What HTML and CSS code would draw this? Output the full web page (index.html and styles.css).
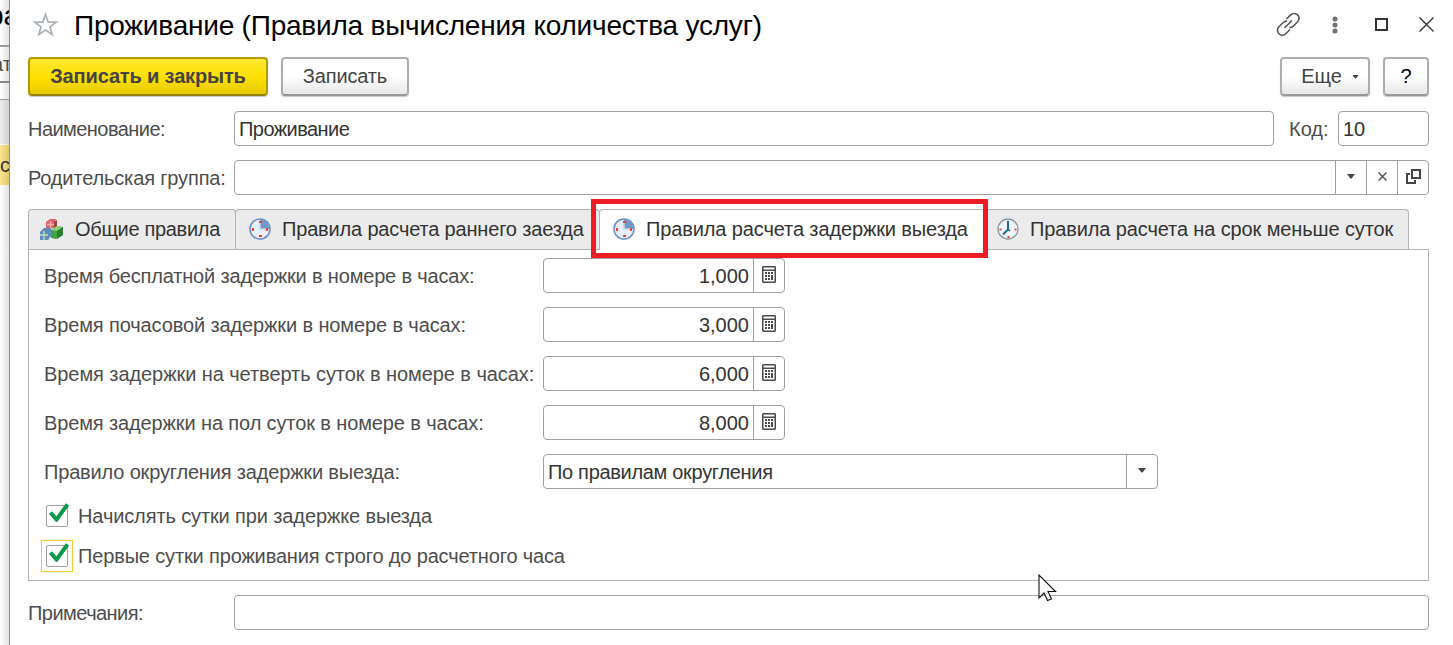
FILE: index.html
```
<!DOCTYPE html>
<html lang="ru">
<head>
  <meta charset="UTF-8" />
  <meta name="viewport" content="width=device-width, initial-scale=1.0"/>
  <title>Проживание (Правила вычисления количества услуг)</title>
  <link rel="stylesheet" href="styles.css">
</head>
<body>

  <!-- shared icons -->
  <svg class="sprite" width="0" height="0">
    <symbol id="calc" viewBox="0 0 14 17">
      <path fill="#4a4a4a" fill-rule="evenodd" d="M1 0h12l1 1v15l-1 1H1l-1-1V1zM1.500 1.500v2h11v-2zM1.500 5v10.500h11V5z"/>
      <path fill="#4a4a4a" d="M3 6h2v2H3zM6 6h2v2H6zM9 6h2v2H9zM3 9h2v2H3zM6 9h2v2H6zM9 9h2v5H9zM3 12h2v2H3zM6 12h2v2H6z"/>
    </symbol>
    <symbol id="clock" viewBox="0 0 22 22">
      <circle cx="11" cy="11" r="10" fill="#e6effb" stroke="#6f92c6" stroke-width="1.600"/>
      <path d="M11 1.500A9.500 9.500 0 0 1 20.500 11H11z" fill="#7495c8"/>
      <path d="M11 4v7h7" fill="none" stroke="#c3d4ec" stroke-width="1.500"/>
      <path fill="#fb3b1e" d="M10 3h3v2h-3zM3 10h2v3H3zM17 10h2v3h-2zM10 17h3v2h-3z"/>
    </symbol>
    <symbol id="tick" viewBox="0 0 20 19">
      <path d="M1.500 9.500l6 7L18.500 1.500" fill="none" stroke="#0a9a4a" stroke-width="4"/>
    </symbol>
    <symbol id="arrow" viewBox="0 0 8 5">
      <path d="M0 0h8L4.500 4.500h-1z" fill="#444"/>
    </symbol>
  </svg>

  <div class="app">
    <aside class="behind">
      <div class="behind-title">ра</div>
      <div class="behind-button">ат</div>
      <div class="behind-head"></div>
      <div class="behind-row">с</div>
    </aside>

    <main class="window">
      <header class="titlebar">
        <svg class="star" width="27" height="25" viewBox="0 0 27 25">
          <path d="M13.500 2.500l2.700 7.600h8l-6.300 4.900 2.300 7.500-6.700-4.500-6.700 4.500 2.300-7.500L2.800 10.100h8z" fill="none" stroke="#a9b0b7" stroke-width="1.700"/>
        </svg>
        <h1>Проживание (Правила вычисления количества услуг)</h1>
        <div class="window-tools">
          <svg width="25" height="25" viewBox="0 0 25 25" fill="none" stroke="#555" stroke-width="1.600">
            <path d="M10.500 7L14.700 2.900a4.800 4.800 0 0 1 6.900 6.900l-4.200 4.300a4.800 4.800 0 0 1-4 1.300"/>
            <path d="M14 17.500l-4.200 4.200a4.800 4.800 0 0 1-6.900-6.900L7.200 10.500a4.800 4.800 0 0 1 4-1.300"/>
            <path d="M8.500 16l7.500-7.500"/>
          </svg>
          <svg class="dots" width="6" height="18" viewBox="0 0 6 18" fill="#707070">
            <circle cx="3" cy="3" r="2.500"/><circle cx="3" cy="9" r="2.500"/><circle cx="3" cy="15" r="2.500"/>
          </svg>
          <svg width="13" height="13" viewBox="0 0 13 13">
            <rect x="1" y="1" width="11" height="11" fill="none" stroke="#333" stroke-width="2"/>
          </svg>
          <svg width="15" height="15" viewBox="0 0 15 15">
            <path d="M.500 .500l14 14M14.500 .500l-14 14" stroke="#333" stroke-width="1.400"/>
          </svg>
        </div>
      </header>

      <div class="commands">
        <button class="btn btn-primary"><span class="t-save-close">Записать и закрыть</span></button>
        <button class="btn btn-save"><span class="t-save">Записать</span></button>
        <button class="btn btn-more">Еще<svg width="7" height="4" viewBox="0 0 8 5"><use href="#arrow"/></svg></button>
        <button class="btn btn-help">?</button>
      </div>

      <div class="row">
        <label class="label"><span class="t-name">Наименование:</span></label>
        <div class="field grow"><span class="value"><span class="t-stay">Проживание</span></span></div>
        <label class="label-code">Код:</label>
        <div class="field code"><span class="value">10</span></div>
      </div>

      <div class="row">
        <label class="label"><span class="t-parent">Родительская группа:</span></label>
        <div class="field grow">
          <span class="value"></span>
          <span class="pick"><svg width="8" height="5"><use href="#arrow"/></svg></span>
          <span class="pick"><svg width="9" height="9" viewBox="0 0 9 9"><path d="M.500 .500l8 8M8.500 .500l-8 8" stroke="#555" stroke-width="1.500"/></svg></span>
          <span class="pick"><svg width="15" height="15" viewBox="0 0 15 15" fill="none" stroke="#444" stroke-width="2"><path d="M6 1h8v8H6zM4 5H1v9h8v-3"/></svg></span>
        </div>
      </div>

      <nav class="tabs">
        <div class="tab tab-common">
          <svg width="24" height="21" viewBox="0 0 24 21">
            <path d="M6 3l4-3h6l-2 9-8 1z" fill="#dd6265"/>
            <path d="M14 3l3-2v7l-3 3z" fill="#9d4444"/>
            <path d="M7 5.500h7M10.500 2v8" stroke="#f3b0a8" stroke-width="1.300"/>
            <path d="M11 11l6-4 6 1v8l-7 4-5-1z" fill="#43a348"/>
            <path d="M11 11l6-4 6 1-6 4z" fill="#8fd07c"/>
            <path d="M17 12l6-4v8l-6 4z" fill="#2c7f35"/>
            <path d="M0 13l4-4h7v8l-3 4H0z" fill="#5c8dbd"/>
            <path d="M0 16h8M4 12v9" stroke="#c6ddb0" stroke-width="1.300"/>
          </svg>
          <span class="t-tab1">Общие правила</span>
        </div>
        <div class="tab tab-early">
          <svg width="22" height="22"><use href="#clock"/></svg>
          <span class="t-tab2">Правила расчета раннего заезда</span>
        </div>
        <div class="tab tab-late active">
          <svg width="22" height="22"><use href="#clock"/></svg>
          <span class="t-tab3">Правила расчета задержки выезда</span>
          <div class="highlight"></div>
        </div>
        <div class="tab tab-short">
          <svg width="22" height="22" viewBox="0 0 22 22">
            <circle cx="11" cy="11" r="10" fill="#eef5fa" stroke="#8d979f" stroke-width="1.300"/>
            <path d="M11 3v8.500l-5 5" fill="none" stroke="#24679a" stroke-width="2"/>
            <path d="M11 11l2 2" stroke="#24679a" stroke-width="1.500"/>
            <path fill="#f0452e" d="M2.500 10.500h2v2h-2zM17.500 10.500h2v2h-2zM10.500 18h2v2h-2z"/>
          </svg>
          <span class="t-tab4">Правила расчета на срок меньше суток</span>
        </div>
      </nav>

      <section class="panel">
        <div class="row">
          <label class="label"><span class="t-free">Время бесплатной задержки в номере в часах:</span></label>
          <div class="field number"><span class="value">1,000</span><span class="pick"><svg width="14" height="17"><use href="#calc"/></svg></span></div>
        </div>
        <div class="row">
          <label class="label"><span class="t-hourly">Время почасовой задержки в номере в часах:</span></label>
          <div class="field number"><span class="value">3,000</span><span class="pick"><svg width="14" height="17"><use href="#calc"/></svg></span></div>
        </div>
        <div class="row">
          <label class="label"><span class="t-quarter">Время задержки на четверть суток в номере в часах:</span></label>
          <div class="field number"><span class="value">6,000</span><span class="pick"><svg width="14" height="17"><use href="#calc"/></svg></span></div>
        </div>
        <div class="row">
          <label class="label"><span class="t-half">Время задержки на пол суток в номере в часах:</span></label>
          <div class="field number"><span class="value">8,000</span><span class="pick"><svg width="14" height="17"><use href="#calc"/></svg></span></div>
        </div>
        <div class="row">
          <label class="label"><span class="t-round">Правило округления задержки выезда:</span></label>
          <div class="field select"><span class="value"><span class="t-rule">По правилам округления</span></span><span class="pick"><svg width="8" height="5"><use href="#arrow"/></svg></span></div>
        </div>

        <div class="check">
          <span class="check-frame"><span class="box"><svg width="20" height="19"><use href="#tick"/></svg></span></span>
          <span class="t-charge">Начислять сутки при задержке выезда</span>
        </div>
        <div class="check">
          <span class="check-frame focused"><span class="box"><svg width="20" height="19"><use href="#tick"/></svg></span></span>
          <span class="t-first">Первые сутки проживания строго до расчетного часа</span>
        </div>
      </section>

      <div class="row">
        <label class="label"><span class="t-notes">Примечания:</span></label>
        <div class="field grow"><span class="value"></span></div>
      </div>

      <svg class="cursor" width="19" height="28" viewBox="0 0 19 28">
        <path d="M1 1v23l5-5 3.500 7.500 4-1.500-3.500-7.500h7.500z" fill="#fff" stroke="#111" stroke-width="1.100"/>
      </svg>
    </main>
  </div>

</body>
</html>
```
FILE: styles.css
```
:root {
  --line: #a0a0a0;
  --text: #333;
  --label: #4d4d4d;
}

* {
  box-sizing: border-box;
}

body {
  margin: 0;
  font-family: "Liberation Sans", Arial, sans-serif;
  font-size: 20px;
  line-height: 24px;
  color: var(--label);
  background: #fff;
  overflow: hidden;
}

svg {
  display: block;
  flex: none;
}

.sprite {
  position: absolute;
}

.app {
  display: flex;
  width: 1453px;
  height: 645px;
}

/* form left behind the window */
.behind {
  width: 9px;
  overflow: hidden;
  white-space: nowrap;
  background: linear-gradient(to right, #fff, #e2e2e2);
}

.behind-title {
  height: 45px;
  padding-top: 3px;
  margin-left: -12px;
  font-size: 28px;
  line-height: 26px;
  color: #000;
}

.behind-button {
  height: 38px;
  padding-top: 5px;
  border-top: 2px solid #999;
  border-bottom: 2px solid #888;
  text-indent: -8px;
}

.behind-head {
  height: 45px;
  margin-top: 16px;
  border-top: 1px solid #999;
  background: linear-gradient(to right, #eee, #d0d0d0);
}

.behind-row {
  height: 40px;
  margin-top: 1px;
  padding-top: 8px;
  background: linear-gradient(to right, #fde68f, #e2c66b);
  color: var(--text);
}

.window {
  position: relative;
  flex: 1;
  padding: 0 24px 0 18px;
  border-left: 1px solid #8e8e8e;
  background: #fff;
}

.titlebar {
  display: flex;
  align-items: center;
  height: 57px;
  padding: 0 0 8px 4px;
}

h1 {
  margin: 2px 0 0 15px;
  font-size: 28px;
  line-height: 32px;
  font-weight: normal;
  letter-spacing: -0.21px;
  color: #000;
  white-space: nowrap;
}

.window-tools {
  display: flex;
  align-items: center;
  margin-left: auto;
  margin-right: -5px;
}

.window-tools svg + svg {
  margin-left: 31px;
}

.window-tools .dots {
  margin-right: 6px;
}

.commands {
  display: flex;
  height: 39px;
  margin-bottom: 15px;
}

.btn {
  display: flex;
  align-items: center;
  justify-content: center;
  height: 39px;
  padding: 0 0 2px;
  border: 2px solid #adadad;
  border-bottom-color: #979797;
  border-radius: 4px;
  background: linear-gradient(#fff 50%, #e6e6e6);
  box-shadow: 0 1px 1px #c8c8c8;
  font: inherit;
  color: #444;
  white-space: nowrap;
}

.btn-primary {
  width: 240px;
  margin-right: 13px;
  border-color: #b09a00;
  border-bottom-color: #958200;
  background: linear-gradient(#ffe92f, #ffe000 50%, #e8cb00);
  font-weight: bold;
}

.btn-save {
  width: 128px;
}

.btn-more {
  width: 90px;
  margin-left: auto;
  margin-right: 13px;
  padding-left: 10px;
  gap: 10px;
}

.btn-more svg {
  margin-top: 3px;
}

.btn-help {
  width: 46px;
  color: #000;
}

.row {
  display: flex;
  align-items: center;
  height: 35px;
  margin-bottom: 14px;
}

.label {
  width: 206px;
  white-space: nowrap;
}

.label-code {
  width: 64px;
  padding-left: 15px;
}

.field {
  display: flex;
  height: 35px;
  border: 1px solid var(--line);
  border-radius: 4px;
  background: #fff;
  color: var(--text);
}

.grow {
  flex: 1;
}

.code {
  width: 91px;
}

.value {
  flex: 1;
  padding: 5px 4px;
  white-space: nowrap;
}

.number {
  width: 242px;
}

.number .value {
  text-align: right;
}

.select {
  width: 615px;
}

.pick {
  display: flex;
  align-items: center;
  justify-content: center;
  width: 31px;
  padding-bottom: 2px;
  border-left: 1px solid var(--line);
}

.tabs {
  display: flex;
  height: 40px;
}

.tab {
  display: flex;
  align-items: center;
  height: 40px;
  padding-bottom: 1px;
  border: 1px solid #b3b3b3;
  border-bottom: 0;
  border-radius: 4px 4px 0 0;
  background: #ebebeb;
  color: var(--text);
  white-space: nowrap;
}

.tab + .tab {
  margin-left: -1px;
}

.tab-common {
  width: 208px;
  padding-left: 11px;
  gap: 11px;
}

.tab-early {
  width: 365px;
  padding-left: 13px;
  gap: 11px;
}

.tab-late {
  position: relative;
  width: 387px;
  padding-left: 13px;
  gap: 11px;
}

.tab-short {
  width: 424px;
  padding-left: 11px;
  gap: 11px;
}

/* active tab hides the panel border under it */
.tab.active {
  z-index: 1;
  height: 41px;
  padding-bottom: 2px;
  background: #fff;
}

.highlight {
  position: absolute;
  left: -9px;
  top: -11px;
  width: 397px;
  height: 59px;
  border: 5px solid #ee1c25;
}

.panel {
  height: 332px;
  margin-bottom: 14px;
  padding: 8px 15px;
  border: 1px solid #b3b3b3;
}

.panel .label {
  width: 499px;
}

.check {
  display: flex;
  align-items: center;
  height: 32px;
  margin: -3px 0 8px -3px;
  gap: 5px;
}

.check + .check {
  margin-top: 0;
}

.check-frame {
  display: flex;
  align-items: center;
  justify-content: center;
  width: 32px;
  height: 32px;
  border: 1px solid transparent;
}

.check-frame.focused {
  border-color: #f5c931;
}

.box {
  width: 22px;
  height: 22px;
  border: 1px solid var(--line);
  border-radius: 2px;
}

.box svg {
  margin: -3px 0 0 2px;
}

.cursor {
  position: absolute;
  left: 1028px;
  top: 574px;
}

/* text tracking */
.t-name,
.t-stay,
.t-notes {
  letter-spacing: -0.55px;
}

.t-tab1,
.t-rule {
  letter-spacing: -0.31px;
}

.t-free,
.t-round,
.t-tab2 {
  letter-spacing: -0.17px;
}

.t-save-close,
.t-save,
.t-parent,
.t-first {
  letter-spacing: -0.15px;
}

.t-hourly,
.t-half,
.t-charge,
.t-tab3,
.t-tab4 {
  letter-spacing: -0.12px;
}

.t-quarter {
  letter-spacing: -0.07px;
}
```
